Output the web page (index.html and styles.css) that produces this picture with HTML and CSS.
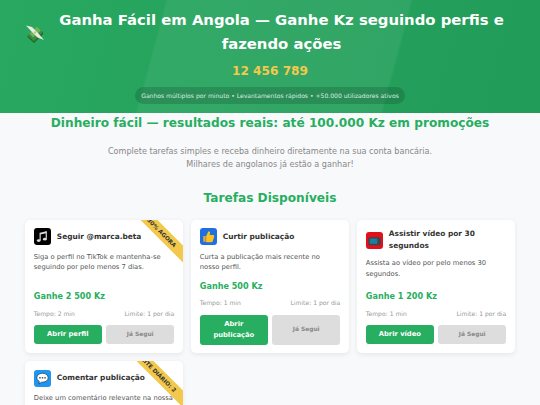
FILE: index.html
```html
<!DOCTYPE html>
<html lang="pt">
<head>
<meta charset="utf-8">
<title>Ganha Fácil em Angola</title>
<link rel="stylesheet" href="styles.css">
</head>
<body>
<header class="hero">
  <div class="hero-row">
    <svg class="hero-money" viewBox="0 0 20 20" aria-hidden="true">
      <path d="M2.500 12.500L12 3.500l6 5.500-9 9.500z" fill="#3f8a3e"/>
      <path d="M2.500 12.500l6.500 6 9-9.500v2l-9 9-6.500-6z" fill="#22602b"/>
      <path d="M4.500 10.500L12 3.500l4 4-8 7z" fill="#6cb35a"/>
      <path d="M1 2.500l6 1.500 6 6 6 7-6.500-2.500-6-6z" fill="#e9ede0"/>
      <circle cx="10" cy="9.500" r="1.300" fill="#a9d18e"/>
    </svg>
    <h1 class="hero-title">Ganha Fácil em Angola — Ganhe Kz seguindo perfis e fazendo ações</h1>
  </div>
  <div class="hero-count">12 456 789</div>
  <div class="hero-pill">Ganhos múltiplos por minuto • Levantamentos rápidos • +50.000 utilizadores ativos</div>
</header>
<main class="page">
  <h2 class="promo">Dinheiro fácil — resultados reais: até 100.000 Kz em promoções</h2>
  <p class="lead">Complete tarefas simples e receba dinheiro diretamente na sua conta bancária.<br>Milhares de angolanos já estão a ganhar!</p>
  <h2 class="section-title">Tarefas Disponíveis</h2>
  <div class="grid">
    <article class="card">
      <div class="ribbon ribbon-a">+30% AGORA</div>
      <div class="card-head">
        <span class="icon icon-black"><svg viewBox="0 0 18 18"><path d="M6.500 5l6.500-1.500v2L6.500 7z" fill="#ddd"/><path d="M6.500 5v8M13 3.500v8" fill="none" stroke="#ddd" stroke-width="1.200"/><ellipse cx="5" cy="13.300" rx="2" ry="1.500" fill="#ddd"/><ellipse cx="11.500" cy="11.800" rx="2" ry="1.500" fill="#ddd"/></svg></span>
        <h3 class="card-title">Seguir @marca.beta</h3>
      </div>
      <p class="card-text">Siga o perfil no TikTok e mantenha-se seguindo por pelo menos 7 dias.</p>
      <div class="reward">Ganhe 2 500 Kz</div>
      <div class="meta"><span>Tempo: 2 min</span><span>Limite: 1 por dia</span></div>
      <div class="actions"><a class="btn btn-go">Abrir perfil</a><a class="btn btn-off">Já Segui</a></div>
    </article>
    <article class="card">
      <div class="card-head">
        <span class="icon icon-blue"><svg viewBox="0 0 18 18"><path d="M3.500 8.500h2.500v6H3.500z" fill="#f0a92e"/><path d="M6.500 8.500L9 3.500c1.500 0 2 1 1.500 2.500L10.200 7.500H14c1 0 1.300 1 1 1.800l-1.500 4.700c-.2.700-.7 1-1.500 1H6.500z" fill="#fcc21b"/></svg></span>
        <h3 class="card-title">Curtir publicação</h3>
      </div>
      <p class="card-text">Curta a publicação mais recente no nosso perfil.</p>
      <div class="reward">Ganhe 500 Kz</div>
      <div class="meta"><span>Tempo: 1 min</span><span>Limite: 1 por dia</span></div>
      <div class="actions"><a class="btn btn-go">Abrir publicação</a><a class="btn btn-off">Já Segui</a></div>
    </article>
    <article class="card">
      <div class="card-head">
        <span class="icon icon-red"><svg viewBox="0 0 18 18"><rect x="2.500" y="5.500" width="13" height="8.500" rx="1" fill="#37474f"/><rect x="4" y="7" width="8" height="5.500" fill="#1e7f9c"/></svg></span>
        <h3 class="card-title">Assistir vídeo por 30 segundos</h3>
      </div>
      <p class="card-text">Assista ao vídeo por pelo menos 30 segundos.</p>
      <div class="reward">Ganhe 1 200 Kz</div>
      <div class="meta"><span>Tempo: 1 min</span><span>Limite: 1 por dia</span></div>
      <div class="actions"><a class="btn btn-go">Abrir vídeo</a><a class="btn btn-off">Já Segui</a></div>
    </article>
    <article class="card">
      <div class="ribbon ribbon-b">LIMITE DIÁRIO: 2</div>
      <div class="card-head">
        <span class="icon icon-sky"><svg viewBox="0 0 18 18"><path d="M9 3.500c3.700 0 6 2 6 4.700s-2.300 4.700-6 4.700l-1 0-2.800 2 .4-2.800C3.800 11.200 3 9.800 3 8.200 3 5.500 5.300 3.500 9 3.500z" fill="#fff" stroke="#0d3f66" stroke-width=".8"/><circle cx="6.300" cy="8.200" r=".9" fill="#444"/><circle cx="9" cy="8.200" r=".9" fill="#444"/><circle cx="11.700" cy="8.200" r=".9" fill="#444"/></svg></span>
        <h3 class="card-title">Comentar publicação</h3>
      </div>
      <p class="card-text">Deixe um comentário relevante na nossa publicação mais recente.</p>
    </article>
  </div>
</main>
</body>
</html>
```
FILE: styles.css
```css
* { box-sizing: border-box; }
html, body { margin: 0; padding: 0; }
body {
  height: 405px;
  overflow: hidden;
  background: #f8f9fb;
  color: #333;
  font-family: "DejaVu Sans", sans-serif;
}
.hero {
  height: 112.700px;
  display: flex;
  flex-direction: column;
  align-items: center;
  padding: 9px 25px 0;
  color: #fff;
  background:
    linear-gradient(105deg, rgba(255,255,255,0) 29%, rgba(255,255,255,.06) 29.500%, rgba(255,255,255,.06) 72%, rgba(255,255,255,0) 72.500%),
    linear-gradient(105deg, #28a860, #229c59);
}
.hero-row { width: 100%; display: flex; align-items: center; gap: 3px; }
.hero-money { width: 20px; height: 20px; flex: none; }
.hero-title {
  flex: 1;
  margin: 0;
  text-align: center;
  font-size: 14.850px;
  line-height: 23.500px;
  font-weight: 700;
}
.hero-count {
  margin-top: 8px;
  color: #f2c94c;
  font-size: 12.150px;
  line-height: 15px;
  font-weight: 700;
}
.hero-pill {
  margin-top: 8px;
  padding: 0 6.500px;
  height: 17px;
  line-height: 17px;
  border-radius: 9px;
  background: rgba(0, 0, 0, .15);
  color: #dcebe2;
  font-size: 6.075px;
  white-space: nowrap;
}
.page { padding: 0 25px; }
.promo {
  margin: .300px 0 0;
  text-align: center;
  color: #27ae60;
  font-size: 12.150px;
  line-height: 20px;
  font-weight: 700;
  white-space: nowrap;
}
.lead {
  margin: 12px 0 0;
  text-align: center;
  color: #888;
  font-size: 8.100px;
  line-height: 13.500px;
}
.section-title {
  margin: 15.800px 0 0;
  text-align: center;
  color: #27ae60;
  font-size: 12.150px;
  line-height: 20px;
  font-weight: 700;
}
.grid {
  margin-top: 11.800px;
  display: grid;
  grid-template-columns: repeat(3, 158px);
  column-gap: 8px;
  row-gap: 8.300px;
}
.card {
  position: relative;
  overflow: hidden;
  height: 133.200px;
  display: flex;
  flex-direction: column;
  padding: 8.800px;
  background: #fff;
  border-radius: 5px;
  box-shadow: 0 1.500px 5px rgba(0, 0, 0, .07);
}
.card-head { display: flex; align-items: center; gap: 6px; min-height: 17px; }
.icon { flex: none; width: 17px; height: 17px; border-radius: 3px; display: flex; }
.icon svg { width: 100%; height: 100%; }
.icon-black { background: #000; }
.icon-blue { background: #1f6fe0; }
.icon-red { background: #e3101a; }
.icon-sky { background: #1e96f0; }
.card-title { margin: 0; font-size: 7.425px; line-height: 11.800px; font-weight: 700; color: #333; }
.card-text { margin: 6.300px 0 0; font-size: 6.750px; line-height: 10.800px; color: #555; }
.reward { margin-top: auto; padding-top: 6.700px; color: #27ae60; font-size: 8.100px; line-height: 12px; font-weight: 700; }
.meta { display: flex; justify-content: space-between; margin-top: 7.300px; color: #999; font-size: 6.075px; line-height: 8px; }
.actions { display: grid; grid-template-columns: 1fr 1fr; gap: 4.300px; margin-top: 7.300px; }
.btn {
  min-height: 19px;
  padding: 4px;
  display: flex;
  align-items: center;
  justify-content: center;
  text-align: center;
  border-radius: 3px;
  font-size: 6.750px;
  line-height: 11px;
  font-weight: 700;
}
.btn-go { background: #27ae60; color: #fff; }
.btn-off { background: #ddd; color: #888; font-size: 5.900px; }
.ribbon {
  position: absolute;
  top: 5px;
  width: 100px;
  height: 12px;
  transform: rotate(45deg);
  background: #f2c94c;
  color: #333;
  font-size: 5.700px;
  line-height: 12px;
  font-weight: 700;
  text-align: center;
  white-space: nowrap;
}
.ribbon-a { right: -27px; }
.ribbon-b { right: -23px; }
```
